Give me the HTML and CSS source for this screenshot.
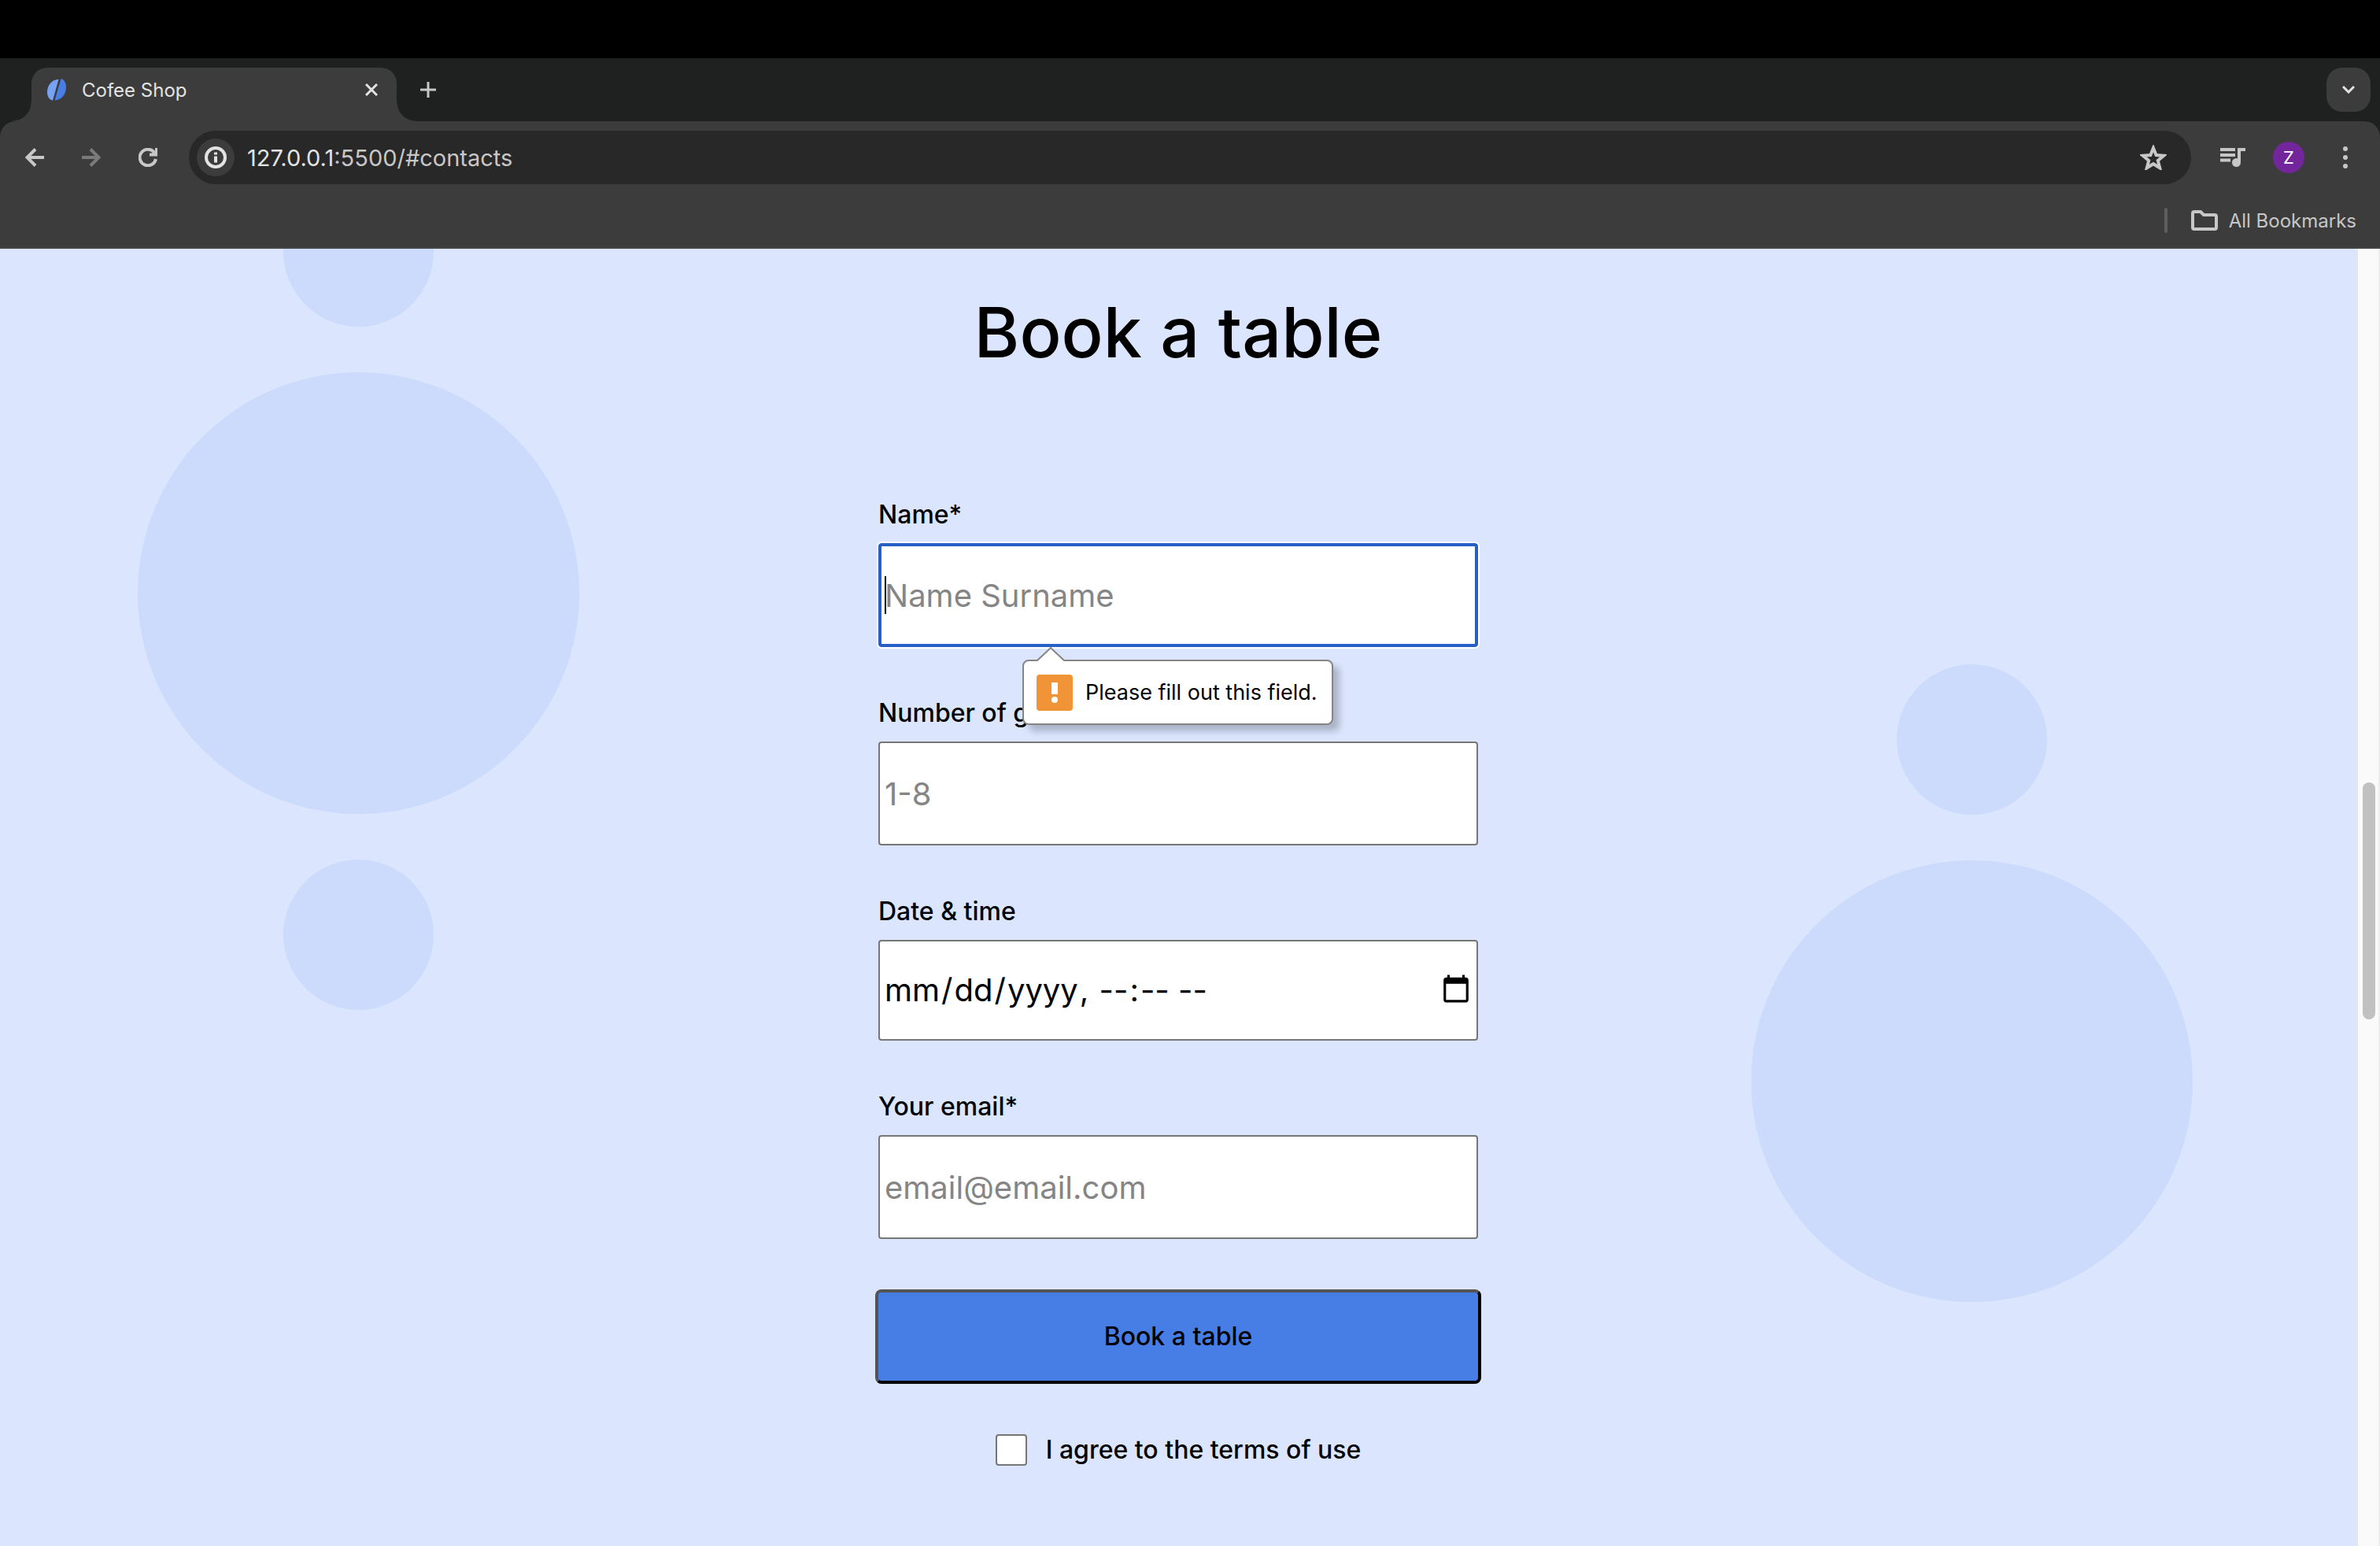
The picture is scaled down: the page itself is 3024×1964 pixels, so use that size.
FILE: index.html
```html
<!DOCTYPE html>
<html lang="en">
<head>
<meta charset="utf-8">
<title>Cofee Shop</title>
<link rel="stylesheet" href="styles.css">
</head>
<body>
<div class="window">
  <header class="browser">
    <div class="tab-strip">
      <div class="tab">
        <svg class="favicon" viewBox="0 0 24 28" aria-hidden="true"><path d="M14.500.8C6 1.500 0 8 0 17c0 6 3 10 7 10.500z" fill="#76a3f3"/><path d="M17.500 0c4 1 6.500 5 6.500 11 0 9-6 16-14.500 16.500z" fill="#477ee6"/></svg>
        <span class="tab-title">Cofee Shop</span>
        <button class="icon-button tab-close" aria-label="Close tab"><svg viewBox="0 0 16 16"><path d="M1 1l14 14M15 1L1 15"/></svg></button>
      </div>
      <button class="icon-button new-tab" aria-label="New tab"><svg viewBox="0 0 20 20"><path d="M10 0v20M0 10h20"/></svg></button>
      <button class="tab-search" aria-label="Search tabs"><svg viewBox="0 0 16 10"><path d="M1 1l7 7 7-7"/></svg></button>
    </div>
    <div class="toolbar">
      <nav class="nav-buttons" aria-label="History">
        <button class="icon-button" aria-label="Back"><svg class="icon-24 bold" viewBox="0 0 24 24"><path d="M24 12H3M13 1.500L2.500 12 13 22.500"/></svg></button>
        <button class="icon-button dim" aria-label="Forward"><svg class="icon-24 bold" viewBox="0 0 24 24"><path d="M0 12h21M11 1.500L21.500 12 11 22.500"/></svg></button>
        <button class="icon-button" aria-label="Reload"><svg class="icon-24 bold" viewBox="0 0 24 24"><path d="M22 14A10.300 10.300 0 1 1 19.500 5l3 3"/><path class="solid" d="M21 0h4v10.500H14v-4h3l4-3z"/></svg></button>
      </nav>
      <div class="omnibox">
        <button class="site-info" aria-label="Site information"><svg viewBox="0 0 28 28"><circle cx="14" cy="14" r="12"/><path d="M14 12.500v8M14 7.500v3"/></svg></button>
        <span class="url">127.0.0.1<span class="url-rest">:5500/#contacts</span></span>
        <button class="icon-button star" aria-label="Bookmark this tab"><svg viewBox="0 0 34 32"><path d="M17 4l3.600 9 9.600.7-7.400 6.200 2.400 9.400L17 24.200l-8.200 5.100 2.400-9.400-7.400-6.200 9.600-.7z"/></svg></button>
      </div>
      <button class="icon-button media" aria-label="Media controls"><svg viewBox="0 0 32 24"><path d="M0 2h19M0 9h19M0 15.500h13"/><path d="M24 18V2h8"/><circle class="solid" cx="20.500" cy="18.500" r="5.500"/></svg></button>
      <button class="avatar" aria-label="Profile">Z</button>
      <button class="icon-button menu" aria-label="Menu"><svg viewBox="0 0 8 28"><g class="solid"><circle cx="4" cy="3" r="3"/><circle cx="4" cy="14" r="3"/><circle cx="4" cy="25" r="3"/></g></svg></button>
    </div>
    <div class="bookmarks-bar">
      <span class="divider"></span>
      <button class="bookmarks"><svg viewBox="0 0 34 26"><path d="M2 4q0-2 2-2h8l4 4h14q2 0 2 2v14q0 2-2 2H4q-2 0-2-2z"/></svg>All Bookmarks</button>
    </div>
  </header>
  <div class="viewport">
    <main class="booking" id="contacts">
      <div class="circles circles-left" aria-hidden="true">
        <span class="circle"></span><span class="circle circle-big"></span><span class="circle"></span>
      </div>
      <section class="content">
        <h1>Book a table</h1>
        <form class="form">
          <div class="field">
            <label for="name">Name*</label>
            <div class="input-wrap">
              <input class="input focused" id="name" type="text" placeholder="Name Surname">
              <span class="caret"></span>
              <div class="bubble" role="alert">
                <svg class="bubble-arrow" viewBox="0 0 36 18" aria-hidden="true"><path class="arrow-fill" d="M1 18L18 1l17 17z"/><path class="arrow-line" d="M1 17L18 1l17 16"/></svg>
                <svg class="bubble-icon" viewBox="0 0 46 46" aria-hidden="true"><rect width="46" height="46" rx="4" fill="#f19337"/><path d="M19 10h8v15h-8z" fill="#fff"/><circle cx="23" cy="32" r="4" fill="#fff"/></svg>
                <span>Please fill out this field.</span>
              </div>
            </div>
          </div>
          <div class="field">
            <label for="guests">Number of guests</label>
            <input class="input" id="guests" type="text" inputmode="numeric" placeholder="1-8">
          </div>
          <div class="field">
            <label for="date">Date &amp; time</label>
            <input class="input input-date" id="date" type="datetime-local">
          </div>
          <div class="field">
            <label for="email">Your email*</label>
            <input class="input" id="email" type="email" placeholder="email@email.com">
          </div>
          <button class="submit" type="submit">Book a table</button>
          <div class="terms">
            <input class="checkbox" id="terms" type="checkbox">
            <label for="terms">I agree to the terms of use</label>
          </div>
        </form>
      </section>
      <div class="circles circles-right" aria-hidden="true">
        <span class="circle"></span><span class="circle circle-big"></span>
      </div>
    </main>
    <div class="scrollbar" aria-hidden="true"><span class="thumb"></span></div>
  </div>
</div>
</body>
</html>
```
FILE: styles.css
```css
* { box-sizing: border-box; }
body { margin: 0; background: #000; font-family: Inter, "Liberation Sans", sans-serif; }
button { margin: 0; padding: 0; border: 0; background: none; color: inherit; font: inherit; }
svg { display: block; fill: none; stroke: currentColor; stroke-width: 4; }
.solid { fill: currentColor; stroke: none; }

.window { display: flex; flex-direction: column; height: 100vh; padding-top: 74px; overflow: hidden; }

/* Browser frame */
.browser { flex: none; background: #1f2120; color: #c7c7c7; font-size: 24px; }
.tab-strip { display: flex; align-items: flex-start; height: 80px; padding: 12px 12px 0 40px; }
.tab { position: relative; display: flex; align-items: center; width: 464px; height: 68px; padding: 0 24px 12px 20px; border-radius: 20px 20px 0 0; background: #3c3c3c; color: #e3e3e3; }
.tab::before, .tab::after { content: ""; position: absolute; bottom: 0; width: 24px; height: 24px; }
.tab::before { right: 100%; background: radial-gradient(circle at 0 0, transparent 23px, #3c3c3c 24px); }
.tab::after { left: 100%; background: radial-gradient(circle at 100% 0, transparent 23px, #3c3c3c 24px); }
.favicon { width: 24px; height: 28px; margin-right: 20px; stroke: none; }
.tab-title { flex: 1; }
.icon-button { display: grid; place-items: center; flex: none; }
.tab-close svg { width: 16px; height: 16px; stroke-width: 3; }
.new-tab { width: 20px; height: 56px; margin-left: 30px; }
.new-tab svg { width: 20px; height: 20px; stroke-width: 3; }
.tab-search { display: grid; place-items: center; width: 56px; height: 56px; margin-left: auto; border-radius: 20px; background: #3c3c3c; color: #e3e3e3; }
.tab-search svg { width: 16px; height: 10px; stroke-width: 3; }

.toolbar { display: flex; align-items: center; padding: 12px 40px 0 32px; border-radius: 20px 20px 0 0; background: #3c3c3c; }
.nav-buttons { display: flex; gap: 48px; margin-right: 40px; }
.icon-24 { width: 24px; height: 24px; }
.dim { color: #7b7b7b; }
.omnibox { display: flex; flex: 1; align-items: center; height: 68px; padding: 0 31px 0 10px; border-radius: 34px; background: #282828; font-size: 29px; }
.site-info { display: grid; place-items: center; width: 48px; height: 48px; margin-right: 16px; border-radius: 50%; background: #3c3c3c; color: #e3e3e3; }
.site-info svg { width: 28px; height: 28px; }
.url { flex: 1; color: #e3e3e3; }
.url-rest { color: #c7c7c7; }
.star svg { width: 34px; height: 32px; }
.media { margin: 0 35px 0 37px; }
.media svg { width: 32px; height: 24px; }
.avatar { width: 40px; height: 40px; border-radius: 50%; background: #73269b; color: #fff; font-size: 22px; }
.menu { margin-left: 48px; }
.menu svg { width: 8px; height: 28px; }
.bookmarks-bar { display: flex; justify-content: flex-end; align-items: center; gap: 30px; height: 82px; padding: 12px 30px 0 0; border-bottom: 2px solid #464646; background: #3c3c3c; }
.divider { width: 4px; height: 32px; border-radius: 2px; background: #5e5e5e; }
.bookmarks { display: flex; align-items: center; gap: 14px; }
.bookmarks svg { width: 34px; height: 26px; }

/* Page */
.viewport { display: flex; flex: 1; min-height: 0; }
.booking { display: grid; grid-template-columns: 1fr 770px 1fr; flex: 1; overflow: hidden; background: #dbe5fe; color: #000; }
.circles { display: flex; flex-direction: column; align-items: center; gap: 58px; }
.circles-left { justify-self: start; margin: -92px 0 0 175px; }
.circles-right { justify-self: end; margin: 528px 208px 0 0; }
.circle { flex: none; width: 191px; height: 191px; border-radius: 50%; background: #ccdbfb; }
.circle-big { width: 561px; height: 561px; }
.content { padding-top: 52px; font-size: 32px; font-weight: 500; line-height: 40px; }
h1 { margin: 0 0 158px; font-size: 88px; font-weight: 500; line-height: 108px; text-align: center; }
.form { display: flex; flex-direction: column; gap: 64px; }
.field { display: flex; flex-direction: column; gap: 16px; margin: 0 4px; }
.input-wrap { position: relative; }
.input { display: block; width: 100%; height: 132px; padding: 0 6px; border: 2px solid #767676; border-radius: 4px; background: #fff; color: #000; font: 400 40px Inter, "Liberation Sans", sans-serif; }
.input::placeholder { color: #858585; }
.input-date { height: 128px; padding: 0 4px 2px; }
.input-date::-webkit-datetime-edit-month-field,
.input-date::-webkit-datetime-edit-day-field,
.input-date::-webkit-datetime-edit-year-field,
.input-date::-webkit-datetime-edit-hour-field,
.input-date::-webkit-datetime-edit-minute-field,
.input-date::-webkit-datetime-edit-ampm-field { padding: 2px; }
.focused { border: 4px solid #285fc7; padding: 0 4px; outline: 2px solid #fff; }
.caret { position: absolute; left: 8px; top: 42px; width: 2px; height: 48px; background: #000; }
.bubble { position: absolute; z-index: 1; top: 148px; left: 183px; display: flex; align-items: center; gap: 16px; height: 83px; padding: 0 18px 0 16px; border: 2px solid #858585; border-radius: 8px; background: #fff; box-shadow: 8px 8px 8px rgba(0, 0, 0, 0.22); font-size: 27px; font-weight: 400; white-space: nowrap; }
.bubble-arrow { position: absolute; left: 16px; top: -18px; width: 36px; height: 18px; }
.arrow-fill { fill: #fff; stroke: none; }
.arrow-line { stroke: #858585; stroke-width: 2; }
.bubble-icon { width: 46px; height: 46px; stroke: none; }
.submit { height: 120px; border: 4px outset #000; border-radius: 8px; background: #477ee6; }
.terms { display: flex; justify-content: center; align-items: center; gap: 24px; }
.checkbox { appearance: none; width: 40px; height: 40px; margin: 0; border: 2px solid #767676; border-radius: 4px; background: #fff; }
.scrollbar { flex: none; width: 30px; padding: 678px 4px 0 6px; border-left: 2px solid #e6e6e6; border-right: 2px solid #ededed; background: #fafafa; }
.thumb { display: block; height: 301px; border-radius: 8px; background: #c1c1c1; }
```
